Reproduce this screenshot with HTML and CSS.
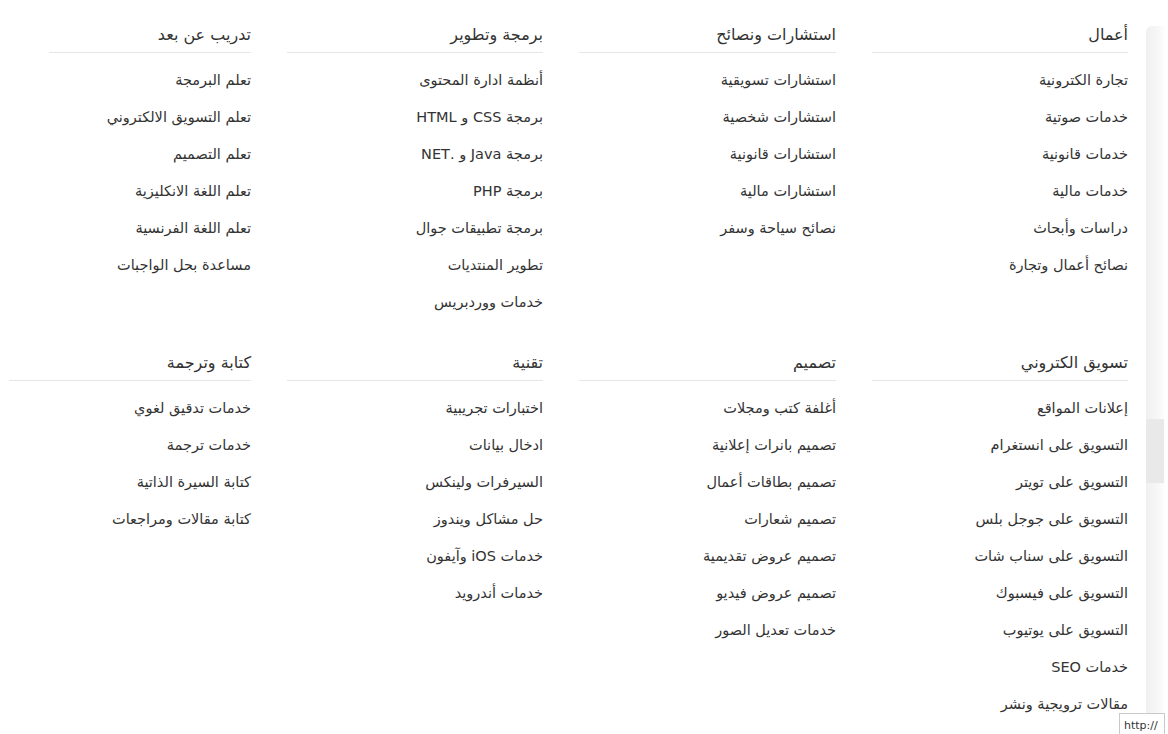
FILE: index.html
```html
<!DOCTYPE html>
<html lang="ar" dir="rtl">
<head>
    <meta charset="UTF-8">
    <meta name="viewport" content="width=device-width, initial-scale=1.0">
    <title>الأقسام</title>
    <link rel="stylesheet" href="styles.css">
</head>
<body>
<div class="menu">
    <div class="cat">
        <h3 class="cat_title">أعمال</h3>
        <ul class="cat_list">
            <li><a href="#">تجارة الكترونية</a></li>
            <li><a href="#">خدمات صوتية</a></li>
            <li><a href="#">خدمات قانونية</a></li>
            <li><a href="#">خدمات مالية</a></li>
            <li><a href="#">دراسات وأبحاث</a></li>
            <li><a href="#">نصائح أعمال وتجارة</a></li>
        </ul>
    </div>
    <div class="cat">
        <h3 class="cat_title">استشارات ونصائح</h3>
        <ul class="cat_list">
            <li><a href="#">استشارات تسويقية</a></li>
            <li><a href="#">استشارات شخصية</a></li>
            <li><a href="#">استشارات قانونية</a></li>
            <li><a href="#">استشارات مالية</a></li>
            <li><a href="#">نصائح سياحة وسفر</a></li>
        </ul>
    </div>
    <div class="cat">
        <h3 class="cat_title">برمجة وتطوير</h3>
        <ul class="cat_list">
            <li><a href="#">أنظمة ادارة المحتوى</a></li>
            <li><a href="#">برمجة CSS و HTML</a></li>
            <li><a href="#">برمجة Java و .NET</a></li>
            <li><a href="#">برمجة PHP</a></li>
            <li><a href="#">برمجة تطبيقات جوال</a></li>
            <li><a href="#">تطوير المنتديات</a></li>
            <li><a href="#">خدمات ووردبريس</a></li>
        </ul>
    </div>
    <div class="cat">
        <h3 class="cat_title short">تدريب عن بعد</h3>
        <ul class="cat_list">
            <li><a href="#">تعلم البرمجة</a></li>
            <li><a href="#">تعلم التسويق الالكتروني</a></li>
            <li><a href="#">تعلم التصميم</a></li>
            <li><a href="#">تعلم اللغة الانكليزية</a></li>
            <li><a href="#">تعلم اللغة الفرنسية</a></li>
            <li><a href="#">مساعدة بحل الواجبات</a></li>
        </ul>
    </div>

    <div class="cat">
        <h3 class="cat_title">تسويق الكتروني</h3>
        <ul class="cat_list">
            <li><a href="#">إعلانات المواقع</a></li>
            <li><a href="#">التسويق على انستغرام</a></li>
            <li><a href="#">التسويق على تويتر</a></li>
            <li><a href="#">التسويق على جوجل بلس</a></li>
            <li><a href="#">التسويق على سناب شات</a></li>
            <li><a href="#">التسويق على فيسبوك</a></li>
            <li><a href="#">التسويق على يوتيوب</a></li>
            <li><a href="#">خدمات SEO</a></li>
            <li><a href="#">مقالات ترويجية ونشر</a></li>
        </ul>
    </div>
    <div class="cat">
        <h3 class="cat_title">تصميم</h3>
        <ul class="cat_list">
            <li><a href="#">أغلفة كتب ومجلات</a></li>
            <li><a href="#">تصميم بانرات إعلانية</a></li>
            <li><a href="#">تصميم بطاقات أعمال</a></li>
            <li><a href="#">تصميم شعارات</a></li>
            <li><a href="#">تصميم عروض تقديمية</a></li>
            <li><a href="#">تصميم عروض فيديو</a></li>
            <li><a href="#">خدمات تعديل الصور</a></li>
        </ul>
    </div>
    <div class="cat">
        <h3 class="cat_title">تقنية</h3>
        <ul class="cat_list">
            <li><a href="#">اختبارات تجريبية</a></li>
            <li><a href="#">ادخال بيانات</a></li>
            <li><a href="#">السيرفرات ولينكس</a></li>
            <li><a href="#">حل مشاكل ويندوز</a></li>
            <li><a href="#">خدمات iOS وآيفون</a></li>
            <li><a href="#">خدمات أندرويد</a></li>
        </ul>
    </div>
    <div class="cat">
        <h3 class="cat_title">كتابة وترجمة</h3>
        <ul class="cat_list">
            <li><a href="#">خدمات تدقيق لغوي</a></li>
            <li><a href="#">خدمات ترجمة</a></li>
            <li><a href="#">كتابة السيرة الذاتية</a></li>
            <li><a href="#">كتابة مقالات ومراجعات</a></li>
        </ul>
    </div>
</div>

<div class="side_shade"><span class="thumb"></span></div>
<div class="link_tip" dir="ltr">http://</div>
</body>
</html>
```

FILE: styles.css
```css
*{
    margin: 0;
    padding: 0;
    list-style: none;
    box-sizing: border-box;
}
body{
    font-family: "DejaVu Sans", "Noto Sans", sans-serif;
    color: #333;
    background: #fff;
    padding: 18px 40px 0 0;
    height: 734px;
    overflow: hidden;
}
.menu{
    display: grid;
    grid-template-columns: 256px 257px 256px 242px;
    column-gap: 36px;
    row-gap: 26px;
    justify-content: start;
}
.cat_title{
    font-size: 16px;
    font-weight: normal;
    line-height: 34px;
    border-bottom: 1px solid #e6e6e6;
    color: #333;
}
.cat_title.short{
    margin-left: 40px;
}
.cat_list{
    margin-top: 8px;
}
.cat_list li{
    line-height: 37px;
    height: 37px;
}
.cat_list a{
    font-size: 14.5px;
    color: #333;
    text-decoration: none;
}
.side_shade{
    position: absolute;
    left: 1146px;
    top: 26px;
    width: 20px;
    height: 708px;
    border-top-left-radius: 6px;
    background: linear-gradient(to right, #f0f0f0, #f7f7f7 60%, #fff);
}
.side_shade .thumb{
    position: absolute;
    left: 0;
    top: 393px;
    width: 18px;
    height: 64px;
    background: #e9e9e9;
}
.link_tip{
    position: absolute;
    left: 1119px;
    top: 713px;
    width: 46px;
    height: 24px;
    border: 1px solid #c9c9c9;
    background: #fff;
    font-family: "DejaVu Sans", sans-serif;
    font-size: 11px;
    line-height: 18px;
    padding: 3px 0 0 4px;
    overflow: hidden;
    color: #333;
}
```
